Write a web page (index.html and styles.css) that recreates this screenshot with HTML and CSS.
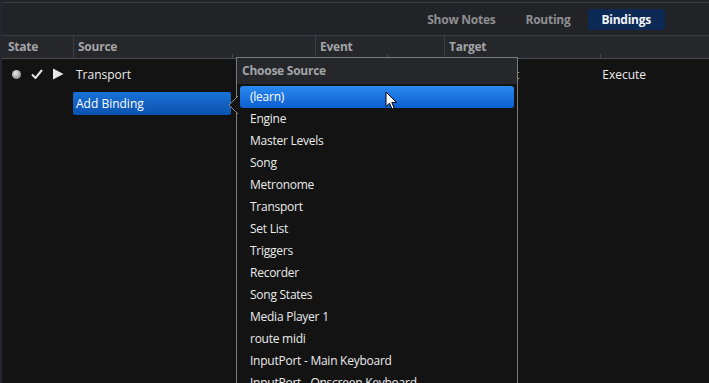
FILE: index.html
```html
<!DOCTYPE html>
<html>
<head>
<meta charset="utf-8">
<link rel="stylesheet" href="styles.css">
</head>
<body>
<div class="app">
  <div class="topbar">
    <div class="tabs">
      <span class="tab">Show Notes</span>
      <span class="tab">Routing</span>
      <span class="tab active">Bindings</span>
    </div>
  </div>
  <div class="header">
    <div class="hcell">State</div>
    <div class="hcell">Source<i class="tick t1"></i></div>
    <div class="hcell">Event<i class="tick t2"></i></div>
    <div class="hcell">Target<i class="tick t3"></i></div>
  </div>
  <div class="body">
    <div class="row row1">
      <div class="cell state">
        <span class="dot"></span>
        <svg class="check" width="12" height="10" viewBox="0 0 12 10"><path d="M1 5.5 L4.5 9 L11 1" fill="none" stroke="#e6e6e6" stroke-width="2"/></svg>
        <svg class="play" width="12" height="12" viewBox="0 0 12 12"><path d="M1 0.5 L11.5 6 L1 11.5 Z" fill="#e6e6e6"/></svg>
      </div>
      <div class="cell src">Transport</div>
      <div class="cell evt"></div>
      <div class="cell tgt"><span class="tgt-a">t</span><span class="tgt-b">Execute</span></div>
    </div>
    <div class="row row2">
      <div class="cell state"></div>
      <div class="cell src"><span class="addbtn">Add Binding</span></div>
    </div>
  </div>

  <div class="popup">
    <svg class="callout" width="10" height="18" viewBox="0 0 10 18"><path d="M10 0 L1 9 L10 18" fill="#131313" stroke="#8a8a8a" stroke-width="1"/></svg>
    <div class="ptitle">Choose Source</div>
    <ul class="plist">
      <li class="sel">(learn)</li>
      <li>Engine</li>
      <li>Master Levels</li>
      <li>Song</li>
      <li>Metronome</li>
      <li>Transport</li>
      <li>Set List</li>
      <li>Triggers</li>
      <li>Recorder</li>
      <li>Song States</li>
      <li>Media Player 1</li>
      <li>route midi</li>
      <li>InputPort - Main Keyboard</li>
      <li>InputPort - Onscreen Keyboard</li>
    </ul>
  </div>

  <svg class="cursor" width="13" height="20" viewBox="0 0 13 20"><path d="M1 1 L1 15.5 L4.5 12.2 L7 18 L9.2 17 L6.8 11.4 L11.5 11.4 Z" fill="#fff" stroke="#000" stroke-width="1" stroke-linejoin="round"/></svg>
</div>
</body>
</html>
```
FILE: styles.css
```css
* { box-sizing: border-box; }
html, body { margin: 0; padding: 0; }
body {
  background: #131313;
  font-family: "Open Sans", "Noto Sans", sans-serif;
  font-size: 12px;
  color: #ececec;
}
.app {
  position: relative;
  width: 709px;
  height: 383px;
  overflow: hidden;
  display: flex;
  flex-direction: column;
  border-left: 2px solid #24272d;
}
.topbar {
  background: #222327;
  padding-top: 2px;
}
.tabs {
  border-top: 1px solid #3a3b40;
  height: 33px;
  display: flex;
  justify-content: flex-end;
  align-items: center;
  padding-right: 44px;
}
.tab {
  font-weight: 700;
  color: #8e8f93;
  padding: 0 15px;
  height: 21px;
  line-height: 21px;
  letter-spacing: -0.25px;
}
.tab.active {
  background: #0c2a55;
  color: #f2f4f8;
  border-radius: 2px;
  padding: 0 14px;
  margin-left: 2px;
}
.header {
  display: grid;
  grid-template-columns: 71px 242px 129px 1fr;
  height: 24px;
  background: #26272b;
  border-top: 1px solid #3a3b40;
  border-bottom: 1px solid #4a4b50;
}
.hcell {
  position: relative;
  font-weight: 700;
  color: #a3a4a8;
  line-height: 22px;
  padding-left: 4px;
  border-left: 1px solid #3e3f44;
  letter-spacing: -0.25px;
}
.hcell:first-child { border-left: none; padding-left: 6px; }
.tick {
  position: absolute;
  bottom: 0;
  width: 1px;
  height: 4px;
  background: #4a4b50;
}
.t1 { left: 158px; }
.t2 { left: 71px; }
.t3 { left: 155px; }
.body {
  flex: 1;
  background: #131313;
}
.row {
  display: grid;
  grid-template-columns: 71px 242px 129px 1fr;
  height: 29px;
  align-items: center;
}
.row1 { height: 30px; }
.cell { white-space: nowrap; }
.state {
  display: flex;
  align-items: center;
  padding-left: 10px;
  height: 100%;
}
.dot {
  width: 9px;
  height: 9px;
  border-radius: 50%;
  background: radial-gradient(circle at 40% 35%, #e8e8e8 0%, #a8a8a8 55%, #6c6c6c 100%);
}
.check { margin-left: 10px; }
.play { margin-left: 9px; }
.src { padding-left: 3px; }
.row2 .src { padding-left: 0; }
.addbtn {
  display: block;
  width: 158px;
  height: 23px;
  line-height: 23px;
  padding-left: 3px;
  border-radius: 2px;
  background: linear-gradient(#1a72d6, #0b52b0);
  color: #fff;
}
.tgt { display: flex; }
.tgt-a { margin-left: 71px; color: #cfcfcf; }
.tgt-b { margin-left: 83px; }

.popup {
  position: absolute;
  left: 234px;
  top: 57px;
  width: 282px;
  height: 340px;
  background: #131313;
  border: 1px solid #7c7c7c;
  border-bottom: none;
}
.callout {
  position: absolute;
  left: -9px;
  top: 38px;
}
.ptitle {
  height: 26px;
  line-height: 25px;
  background: #26272b;
  color: #a3a4a8;
  font-weight: 700;
  padding-left: 5px;
  letter-spacing: -0.25px;
}
.plist {
  list-style: none;
  margin: 0;
  padding: 2px 3px 0 3px;
}
.plist li {
  height: 22px;
  line-height: 22px;
  padding-left: 10px;
  color: #ebebeb;
  white-space: nowrap;
  letter-spacing: -0.25px;
}
.plist li.sel {
  background: linear-gradient(#2a8af0, #0c5fcf);
  border-radius: 3px;
  color: #fff;
}
.cursor {
  position: absolute;
  left: 383px;
  top: 91px;
}
```
